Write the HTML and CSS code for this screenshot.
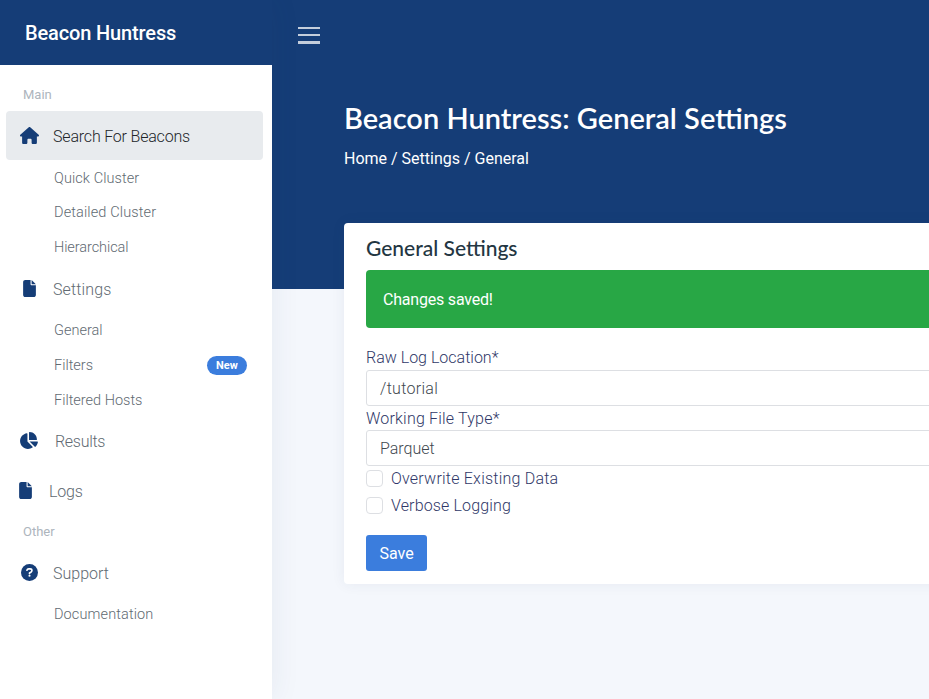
FILE: index.html
```html
<!DOCTYPE html>
<html lang="en">
<head>
<meta charset="utf-8">
<title>Beacon Huntress</title>
<link rel="stylesheet" href="styles.css">
</head>
<body>
<svg class="defs" aria-hidden="true">
  <symbol id="house" viewBox="0 0 576 512"><path d="M575.8 255.500c0 18-15 32.100-32 32.100h-32l.7 160.200c0 2.700-.2 5.400-.5 8.100V472c0 22.100-17.900 40-40 40H392c-22.100 0-40-17.900-40-40v-88c0-17.700-14.300-32-32-32h-64c-17.700 0-32 14.300-32 32v88c0 22.100-17.900 40-40 40h-80c-22.100 0-40-17.900-40-40V287.600H32c-18 0-32-14-32-32.100 0-9 3-17 10-24L266.400 8c7-7 15-8 22-8s15 2 21 7l255.400 224.500c8 7 12 15 11 24z"/></symbol>
  <symbol id="file" viewBox="0 0 384 512"><path d="M0 64C0 28.700 28.700 0 64 0h160v128c0 17.700 14.300 32 32 32h128v288c0 35.300-28.700 64-64 64H64c-35.300 0-64-28.700-64-64V64zm384 64H256V0l128 128z"/></symbol>
  <symbol id="pie" viewBox="0 0 576 512"><path d="M304 240V16.600c0-9 7-16.600 16-16.600 123.700 0 224 100.300 224 224 0 9-7.600 16-16.600 16H304zM32 272C32 150.700 122.100 50.300 239 34.300c9.200-1.300 17 6.100 17 15.400V288l156.500 156.500c6.700 6.700 6.200 17.700-1.500 23.100C371.800 495.600 323.800 512 272 512 139.500 512 32 404.600 32 272zm526.400 16c9.300 0 16.600 7.800 15.400 17-7.700 55.900-34.600 105.600-73.900 142.300-6 5.600-15.400 5.200-21.200-.7L320 288h238.400z"/></symbol>
  <symbol id="question" viewBox="0 0 512 512"><circle cx="256" cy="256" r="256"/><path class="mark" d="M178 190c8-31 25-43 56-43h38c34 0 58 22 58 51 0 23-12 38-32 50l-42 24v22"/><circle class="dot" cx="256" cy="352" r="32"/></symbol>
</svg>
<div class="app">
  <aside class="sidebar">
    <div class="brand"><span>Beacon Huntress</span></div>
    <nav class="nav">
      <div class="heading first"><span>Main</span></div>
      <a class="item active"><svg class="icon wide"><use href="#house"/></svg><span class="t-search">Search For Beacons</span></a>
      <a class="sub"><span class="t-quick">Quick Cluster</span></a>
      <a class="sub"><span class="t-detailed">Detailed Cluster</span></a>
      <a class="sub"><span class="t-hier">Hierarchical</span></a>
      <a class="item settings"><svg class="icon"><use href="#file"/></svg><span class="t-settings">Settings</span></a>
      <a class="sub lower"><span>General</span></a>
      <a class="sub lower"><span>Filters</span><b class="badge">New</b></a>
      <a class="sub lower"><span>Filtered Hosts</span></a>
      <a class="item results"><svg class="icon wide"><use href="#pie"/></svg><span class="t-results">Results</span></a>
      <a class="item logs"><svg class="icon"><use href="#file"/></svg><span class="t-logs">Logs</span></a>
      <div class="heading"><span>Other</span></div>
      <a class="item support"><svg class="icon"><use href="#question"/></svg><span>Support</span></a>
      <a class="sub"><span class="t-doc">Documentation</span></a>
    </nav>
  </aside>
  <main class="main">
    <header class="hero">
      <button class="toggle" aria-label="Menu"><i></i><i></i><i></i></button>
      <h1><span>Beacon Huntress: General Settings</span></h1>
      <div class="crumbs"><span>Home / Settings / General</span></div>
    </header>
    <section class="card">
      <h2><span>General Settings</span></h2>
      <div class="alert"><span>Changes saved!</span></div>
      <form>
        <label class="label"><span>Raw Log Location*</span></label>
        <div class="field"><span class="t-tutorial">/tutorial</span></div>
        <label class="label second"><span class="t-type">Working File Type*</span></label>
        <div class="field"><span>Parquet</span></div>
        <label class="check"><i></i><span class="t-over">Overwrite Existing Data</span></label>
        <label class="check"><i></i><span class="t-verbose">Verbose Logging</span></label>
        <button type="button" class="save"><span>Save</span></button>
      </form>
    </section>
  </main>
</div>
</body>
</html>
```
FILE: styles.css
```css
* { box-sizing: border-box; }
body { margin: 0; font: 300 16px/24px Roboto, "Noto Sans", sans-serif; color: #616a72; background: #f4f7fc; overflow: hidden; }
.defs { display: none; }
.app { display: flex; height: 699px; overflow: hidden; }
.sidebar { width: 272px; flex: none; background: #fff; box-shadow: 0 0 28px rgba(40, 60, 100, .08); z-index: 1; }
.brand { height: 65px; padding: 1px 0 0 25px; display: flex; align-items: center; background: #153d77; color: #fff; font-size: 20px; font-weight: 500; letter-spacing: -.14px; }
.nav { padding: 0 9px 0 6px; }
.heading { height: 33px; padding-left: 17px; display: flex; align-items: center; color: #adb5bd; font-size: 13px; font-weight: 400; }
.heading.first { height: 46px; padding-top: 13px; }
.item { display: flex; align-items: center; height: 49px; padding: 2px 0 0 14px; }
.item.active { background: #e8ebee; color: #212529; border-radius: 4px; }
.icon { width: 17px; height: 17px; margin: -2px 15px 0 1px; fill: #153d77; overflow: visible; }
.icon.wide { width: 19px; margin: -2px 14px 0 0; }
.item.settings { height: 47px; }
.item.results { padding-top: 0; }
.item.results .icon { margin: -3px 17px 0 -1px; }
.item.logs { padding-left: 10px; }
.mark { fill: none; stroke: #fff; stroke-width: 48px; stroke-linecap: round; stroke-linejoin: round; }
.dot { fill: #fff; }
.sub { display: flex; align-items: center; height: 35px; padding-left: 48px; font-size: 14.500px; }
.lower, .sub:nth-child(3) { padding-top: 2px; }
.badge { margin-left: auto; margin-right: 16px; width: 40px; height: 19px; border-radius: 10px; background: #3b7ddd; color: #fff; font: 700 11px/19px Roboto, sans-serif; text-align: center; letter-spacing: .1px; }
.main { flex: 1; min-width: 0; }
.hero { height: 289px; background: #153d77; color: #fff; padding: 27px 0 0 72px; }
.toggle { display: flex; flex-direction: column; justify-content: space-between; width: 22px; height: 17px; margin: 0 0 0 -46px; padding: 0; border: 0; background: none; }
.toggle i { display: block; height: 2px; background: #c4cedc; }
.toggle i:last-child { height: 3px; }
h1 { margin: 56px 0 0; font: 600 29px/36px Lato, sans-serif; white-space: nowrap; }
.crumbs { margin-top: 11px; font-weight: 400; }
.card { width: 900px; height: 361px; margin: -66px 0 0 72px; padding: 13px 22px; background: #fff; border-radius: 4px; box-shadow: 0 0 14px rgba(40, 60, 100, .07); position: relative; }
h2 { margin: 0 0 10px; font: 500 21px/24px Lato, sans-serif; color: #233642; }
.alert { height: 58px; padding: 1px 17px 0; display: flex; align-items: center; border-radius: 4px; background: #28a745; color: #fff; font-weight: 400; margin-bottom: 17px; letter-spacing: -.2px; }
.label { display: flex; align-items: center; height: 25px; color: #303868; }
.field { display: flex; align-items: center; height: 36px; padding: 2px 0 0 13px; border: 1px solid #dddfe3; border-radius: 3px; color: #41484f; }
.second { height: 24px; padding-top: 2px; }
.check { display: flex; align-items: center; height: 27px; color: #303868; position: relative; top: -1px; }
.check i { width: 17px; height: 17px; margin-right: 8px; border: 1px solid #dddfe3; border-radius: 4px; }
.save { display: block; width: 61px; height: 36px; margin-top: 15px; padding: 2px 0 0; border: 0; border-radius: 3px; background: #3b7ddd; color: #fff; font: 400 16px/34px Roboto, sans-serif; }
.t-search { letter-spacing: -.19px; }
.t-quick { letter-spacing: .08px; }
.t-detailed { letter-spacing: .13px; }
.t-hier { letter-spacing: -.08px; }
.t-settings { letter-spacing: .12px; }
.t-results { letter-spacing: -.3px; }
.t-logs { letter-spacing: -.2px; }
.t-doc { letter-spacing: .12px; }
.t-tutorial { letter-spacing: .3px; }
.t-type { letter-spacing: .2px; }
.t-over { letter-spacing: .22px; }
.t-verbose { letter-spacing: .15px; }
```
